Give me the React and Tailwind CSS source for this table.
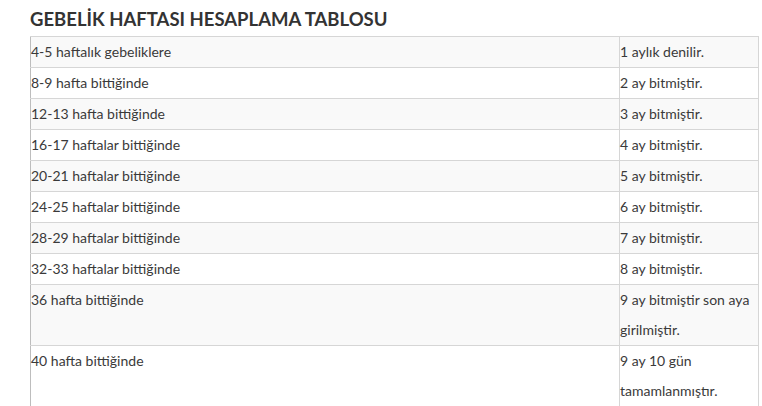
const rows = [
  ["4-5 haftalık gebeliklere", "1 aylık denilir."],
  ["8-9 hafta bittiğinde", "2 ay bitmiştir."],
  ["12-13 hafta bittiğinde", "3 ay bitmiştir."],
  ["16-17 haftalar bittiğinde", "4 ay bitmiştir."],
  ["20-21 haftalar bittiğinde", "5 ay bitmiştir."],
  ["24-25 haftalar bittiğinde", "6 ay bitmiştir."],
  ["28-29 haftalar bittiğinde", "7 ay bitmiştir."],
  ["32-33 haftalar bittiğinde", "8 ay bitmiştir."],
  ["36 hafta bittiğinde", "9 ay bitmiştir son aya girilmiştir."],
  ["40 hafta bittiğinde", "9 ay 10 gün tamamlanmıştır."],
];

export default function App() {
  return (
    <div className="w-[762px] h-[406px] overflow-hidden bg-white pl-[30px] pt-[7px] font-['Lato','Liberation_Sans',sans-serif]">
      <h2 className="text-[18.5px] leading-[24px] font-bold text-[#333] mb-[5px]">
        GEBELİK HAFTASI HESAPLAMA TABLOSU
      </h2>
      <table className="w-[728px] table-fixed border-collapse text-[14px] leading-[30px] text-[#3a3a3a]">
        <colgroup>
          <col className="w-[589px]" />
          <col className="w-[139px]" />
        </colgroup>
        <tbody>
          {rows.map(([a, b], i) => (
            <tr key={i} className={i % 2 === 0 ? "bg-[#f9f9f9]" : "bg-white"}>
              <td className="border border-[#d6d6d6] border-l-[#bdbdbd] p-0 align-top">{a}</td>
              <td className="border border-[#d6d6d6] border-l-[#c4c4c4] p-0 align-top">{b}</td>
            </tr>
          ))}
        </tbody>
      </table>
    </div>
  );
}
